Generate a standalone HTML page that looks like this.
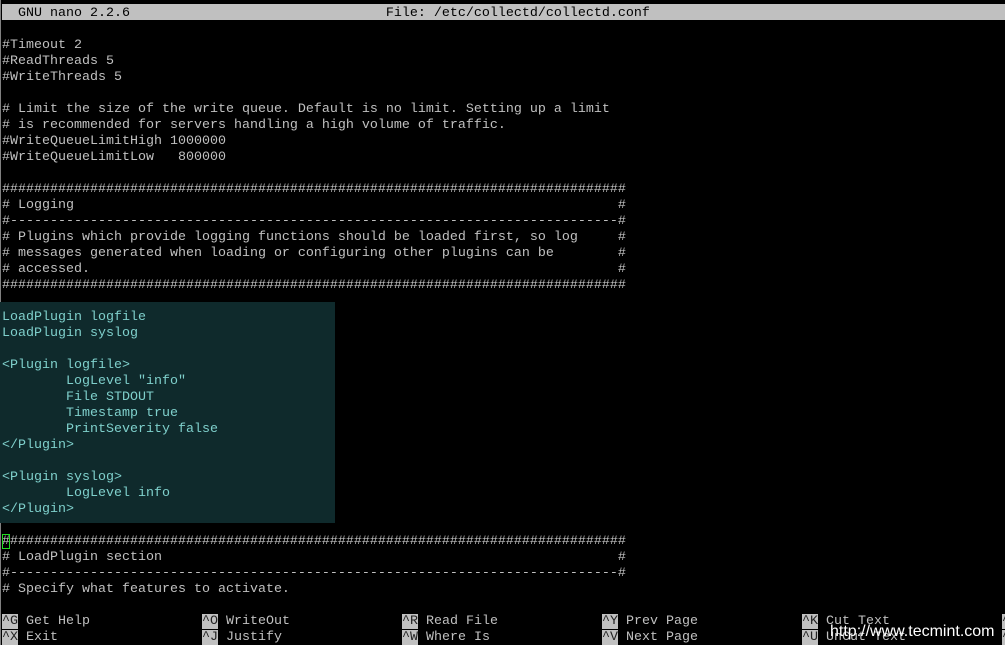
<!DOCTYPE html>
<html><head><meta charset="utf-8"><style>
html,body{margin:0;padding:0;background:#000;width:1005px;height:645px;overflow:hidden;position:relative}
pre{margin:0;font-family:"Liberation Mono",monospace;font-size:13.33px;line-height:16px;color:#c0c0c0;position:absolute;left:2px;white-space:pre}
.bar{position:absolute;left:2px;top:4px;width:1003px;height:16px;background:#c0c0c0}
.bar pre{color:#000;left:0;top:2px}
.hl{position:absolute;left:0;top:302px;width:335px;height:221px;background:#0f2a2c}
.c{color:#7fd0cc}
.k{background:#c0c0c0;color:#222}
.cur{outline:1px solid #22dd22;outline-offset:-1px}
.lb{position:absolute;left:0;top:0;width:1px;height:645px;background:#808080}
.wm{position:absolute;left:830px;top:623px;font-family:"Liberation Sans",sans-serif;font-size:16px;color:#fff}
</style></head><body>
<div class="lb"></div>
<div class="bar"><pre>  GNU nano 2.2.6                                File: /etc/collectd/collectd.conf</pre></div>
<div class="hl"></div>
<pre style="top:38px">#Timeout 2
#ReadThreads 5
#WriteThreads 5

# Limit the size of the write queue. Default is no limit. Setting up a limit
# is recommended for servers handling a high volume of traffic.
#WriteQueueLimitHigh 1000000
#WriteQueueLimitLow   800000

##############################################################################
# Logging                                                                    #
#----------------------------------------------------------------------------#
# Plugins which provide logging functions should be loaded first, so log     #
# messages generated when loading or configuring other plugins can be        #
# accessed.                                                                  #
##############################################################################

<span class="c">LoadPlugin logfile
LoadPlugin syslog

&lt;Plugin logfile&gt;
        LogLevel "info"
        File STDOUT
        Timestamp true
        PrintSeverity false
&lt;/Plugin&gt;

&lt;Plugin syslog&gt;
        LogLevel info
&lt;/Plugin&gt;</span>

<span class="cur">#</span>#############################################################################
# LoadPlugin section                                                         #
#----------------------------------------------------------------------------#
# Specify what features to activate.</pre>
<pre style="top:614px;left:2px"><span class="k">^G</span> Get Help
<span class="k">^X</span> Exit</pre>
<pre style="top:614px;left:202px"><span class="k">^O</span> WriteOut
<span class="k">^J</span> Justify</pre>
<pre style="top:614px;left:402px"><span class="k">^R</span> Read File
<span class="k">^W</span> Where Is</pre>
<pre style="top:614px;left:602px"><span class="k">^Y</span> Prev Page
<span class="k">^V</span> Next Page</pre>
<pre style="top:614px;left:802px"><span class="k">^K</span> Cut Text
<span class="k">^U</span> UnCut Text</pre>
<pre style="top:614px;left:1002px"><span class="k">^C</span>
<span class="k">^T</span></pre>
<div class="wm">http://www.tecmint.com</div>
</body></html>
